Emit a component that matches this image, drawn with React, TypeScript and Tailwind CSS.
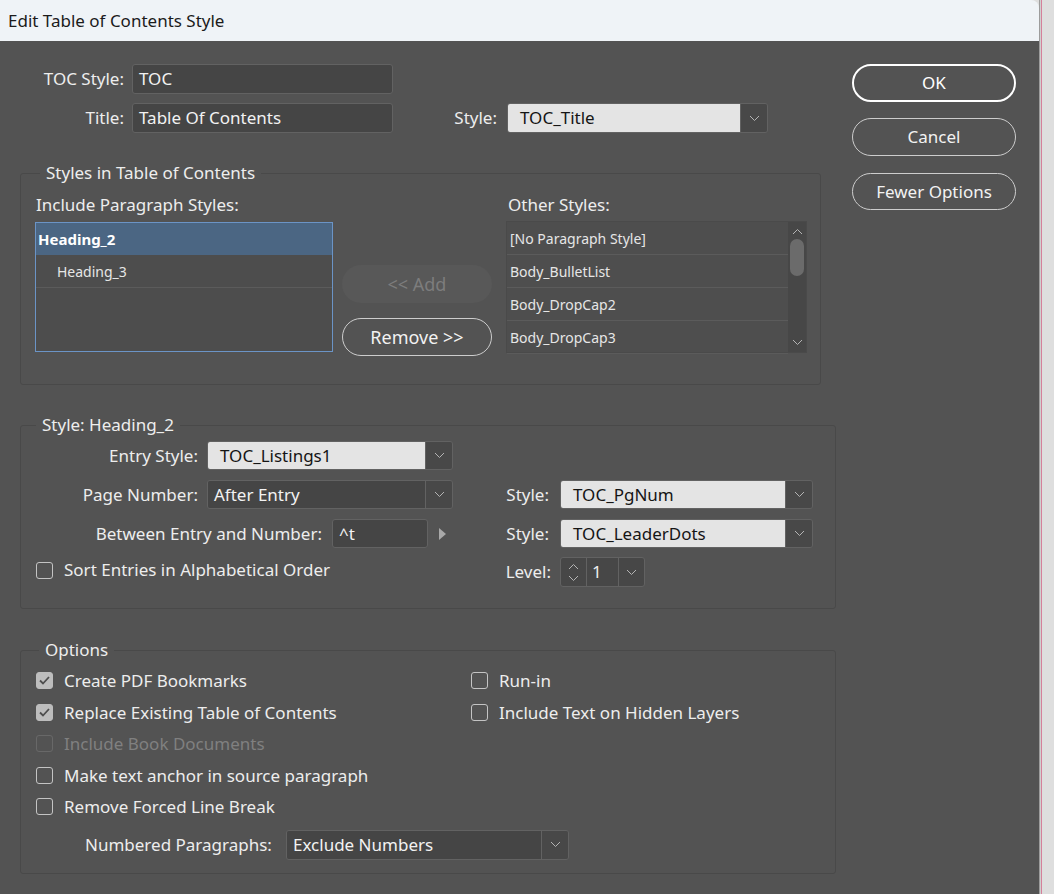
import React from 'react';
import clsx from 'clsx';

function Chevron({ up = false, className }: { up?: boolean; className?: string }) {
  return (
    <svg width="11" height="7" viewBox="0 0 11 7" className={className}>
      <polyline
        points={up ? '1,6 5.5,1.5 10,6' : '1,1 5.5,5.5 10,1'}
        fill="none"
        stroke="#b4b4b4"
        strokeWidth="1"
      />
    </svg>
  );
}

function TextInput({ value, className }: { value: string; className?: string }) {
  return (
    <div
      className={clsx(
        'flex h-full items-center rounded-[3px] border border-[#626262] bg-[#454545] pl-[6px] text-[#f2f2f2]',
        className
      )}
    >
      {value}
    </div>
  );
}

function Dropdown({ value, light, className }: { value: string; light?: boolean; className?: string }) {
  return (
    <div className={clsx('flex h-full rounded-[3px] border border-[#626262] overflow-hidden', className)}>
      <div
        className={clsx(
          'flex flex-1 items-center',
          light ? 'bg-[#e4e4e4] pl-[12px] text-[#151515]' : 'bg-[#454545] pl-[6px] text-[#f2f2f2]'
        )}
      >
        {value}
      </div>
      <div className="flex w-[27px] items-center justify-center border-l border-[#626262] bg-[#484848]">
        <Chevron />
      </div>
    </div>
  );
}

function Checkbox({ checked, disabled }: { checked?: boolean; disabled?: boolean }) {
  return (
    <div
      className={clsx(
        'flex h-[17px] w-[17px] shrink-0 items-center justify-center rounded-[3px] border',
        checked
          ? 'border-[#bdbdbd] bg-[#bdbdbd]'
          : disabled
          ? 'border-[#686868]'
          : 'border-[#c4c4c4]'
      )}
    >
      {checked && (
        <svg width="11" height="9" viewBox="0 0 11 9">
          <polyline points="1,4.5 4,7.5 10,1" fill="none" stroke="#4e4e4e" strokeWidth="1.8" />
        </svg>
      )}
    </div>
  );
}

function CheckRow({ label, checked, disabled }: { label: string; checked?: boolean; disabled?: boolean }) {
  return (
    <div className="flex h-[31.5px] items-center">
      <Checkbox checked={checked} disabled={disabled} />
      <span className={clsx('ml-[11px]', disabled ? 'text-[#808080]' : 'text-[#ededed]')}>{label}</span>
    </div>
  );
}

const otherStyles = ['[No Paragraph Style]', 'Body_BulletList', 'Body_DropCap2', 'Body_DropCap3'];

export default function App() {
  return (
    <div className="flex h-[894px] w-[1054px] overflow-hidden bg-[#dedede] font-['Noto_Sans',sans-serif]">
      <div className="flex w-[1040px] shrink-0 flex-col border-r border-[#9c9c9c]">
        {/* Title bar */}
        <div className="flex h-[41px] items-center rounded-tr-[8px] bg-[#eff3f7] pl-[8px] text-[17px] text-[#1b1b1b]">
          Edit Table of Contents Style
        </div>

        {/* Body */}
        <div className="flex flex-1 bg-[#535353] pl-5 pt-[23px] text-[17px] text-[#ededed]">
          <div className="w-[816px]">
            {/* TOC Style / Title */}
            <div className="flex flex-col gap-[9px]">
              <div className="flex h-[30px] items-center">
                <span className="w-[104px] text-right">TOC Style:</span>
                <TextInput value="TOC" className="ml-2 w-[261px]" />
              </div>
              <div className="flex h-[30px] items-center">
                <span className="w-[104px] text-right">Title:</span>
                <TextInput value="Table Of Contents" className="ml-2 w-[261px]" />
                <span className="ml-[54px] w-[50px] text-right">Style:</span>
                <Dropdown value="TOC_Title" light className="ml-[10px] w-[261px]" />
              </div>
            </div>

            {/* Styles in Table of Contents */}
            <fieldset className="mt-[28px] w-[801px] rounded-[3px] border border-[#494949]">
              <legend className="ml-[19px] px-[6px] leading-[24px]">Styles in Table of Contents</legend>
              <div className="flex items-start pb-[28px] pl-[14px] pt-[9px]">
                <div className="w-[298px]">
                  <div className="h-[22px] pl-[1px] leading-[22px]">Include Paragraph Styles:</div>
                  <div className="mt-[6px] h-[130px] border border-[#6b94c6] bg-[#4d4d4d]">
                    <div className="flex h-[32px] items-center bg-[#4b6683] pl-[2px] text-[15px] font-bold text-white">
                      Heading_2
                    </div>
                    <div className="flex h-[33px] items-center border-b border-[#5b5b5b] pl-[21px] text-[14px] text-[#e6e6e6]">
                      Heading_3
                    </div>
                  </div>
                </div>
                <div className="ml-[9px] flex w-[150px] flex-col pt-[71px] text-[18px]">
                  <div className="flex h-[38px] items-center justify-center rounded-[19px] bg-[#585858] text-[#7d7d7d]">
                    &lt;&lt; Add
                  </div>
                  <div className="mt-[15px] flex h-[38px] items-center justify-center rounded-[19px] border border-[#cdcdcd] text-[#f2f2f2]">
                    Remove &gt;&gt;
                  </div>
                </div>
                <div className="ml-[14px] w-[301px]">
                  <div className="h-[22px] pl-[2px] leading-[22px]">Other Styles:</div>
                  <div className="mt-[5px] flex h-[132px] border border-[#4a4a4a] bg-[#4e4e4e] text-[14px] text-[#e6e6e6]">
                    <div className="flex-1">
                      {otherStyles.map((s) => (
                        <div key={s} className="flex h-[33px] items-center border-b border-[#5b5b5b] pl-[3px]">
                          {s}
                        </div>
                      ))}
                    </div>
                    <div className="flex w-[18px] flex-col items-center bg-[#474747] pt-[6px]">
                      <Chevron up />
                      <div className="mt-[4px] h-[37px] w-[14px] rounded-[7px] bg-[#6b6b6b]" />
                      <div className="flex-1" />
                      <Chevron className="mb-[6px]" />
                    </div>
                  </div>
                </div>
              </div>
            </fieldset>

            {/* Style: Heading_2 */}
            <fieldset className="mt-[28px] w-[816px] rounded-[3px] border border-[#494949]">
              <legend className="ml-[15px] px-[6px] leading-[24px]">Style: Heading_2</legend>
              <div className="flex items-start pb-[21px] pt-[4px]">
                <div className="w-[479px]">
                  <div className="flex h-[29px] items-center">
                    <span className="w-[177px] text-right">Entry Style:</span>
                    <Dropdown value="TOC_Listings1" light className="ml-[9px] w-[246px]" />
                  </div>
                  <div className="mt-[10px] flex h-[29px] items-center">
                    <span className="w-[177px] text-right">Page Number:</span>
                    <Dropdown value="After Entry" className="ml-[9px] w-[246px]" />
                  </div>
                  <div className="mt-[10px] flex h-[29px] items-center">
                    <span className="w-[301px] text-right">Between Entry and Number:</span>
                    <TextInput value="^t" className="ml-[10px] w-[96px]" />
                    <svg width="7" height="12" viewBox="0 0 7 12" className="ml-[11px]">
                      <polygon points="0,0 7,6 0,12" fill="#a9a9a9" />
                    </svg>
                  </div>
                  <div className="mt-[11px] flex h-[22px] items-center pl-[15px]">
                    <Checkbox />
                    <span className="ml-[11px]">Sort Entries in Alphabetical Order</span>
                  </div>
                </div>
                <div className="pt-[39px]">
                  <div className="flex h-[29px] items-center">
                    <span className="w-[49px] text-right">Style:</span>
                    <Dropdown value="TOC_PgNum" light className="ml-[11px] w-[253px]" />
                  </div>
                  <div className="mt-[10px] flex h-[29px] items-center">
                    <span className="w-[49px] text-right">Style:</span>
                    <Dropdown value="TOC_LeaderDots" light className="ml-[11px] w-[253px]" />
                  </div>
                  <div className="mt-[9px] flex h-[30px] items-center">
                    <span className="w-[51px] text-right">Level:</span>
                    <div className="ml-[9px] flex h-full w-[85px] overflow-hidden rounded-[3px] border border-[#626262] bg-[#474747]">
                      <div className="flex w-[26px] flex-col items-center justify-center gap-[5px] border-r border-[#626262]">
                        <Chevron up />
                        <Chevron />
                      </div>
                      <div className="flex w-[32px] items-center border-r border-[#626262] pl-[5px]">1</div>
                      <div className="flex flex-1 items-center justify-center">
                        <Chevron />
                      </div>
                    </div>
                  </div>
                </div>
              </div>
            </fieldset>

            {/* Options */}
            <fieldset className="mt-[29px] w-[816px] rounded-[3px] border border-[#494949]">
              <legend className="ml-[18px] px-[6px] leading-[24px]">Options</legend>
              <div className="pb-[13px] pl-[15px] pt-[3px]">
                <div className="grid grid-cols-[435px_1fr]">
                  <CheckRow label="Create PDF Bookmarks" checked />
                  <CheckRow label="Run-in" />
                  <CheckRow label="Replace Existing Table of Contents" checked />
                  <CheckRow label="Include Text on Hidden Layers" />
                  <CheckRow label="Include Book Documents" disabled />
                  <div />
                  <CheckRow label="Make text anchor in source paragraph" />
                  <div />
                  <CheckRow label="Remove Forced Line Break" />
                  <div />
                </div>
                <div className="mt-[7px] flex h-[30px] items-center pl-[49px]">
                  <span className="w-[187px] whitespace-nowrap">Numbered Paragraphs:</span>
                  <Dropdown value="Exclude Numbers" className="ml-[14px] w-[283px]" />
                </div>
              </div>
            </fieldset>
          </div>

          {/* Buttons */}
          <div className="ml-4 flex w-[164px] flex-col">
            <div className="flex h-[38px] items-center justify-center rounded-[19px] border-2 border-white text-white">
              OK
            </div>
            <div className="mt-[16px] flex h-[38px] items-center justify-center rounded-[19px] border border-[#cdcdcd] text-[#f2f2f2]">
              Cancel
            </div>
            <div className="mt-[17px] flex h-[37px] items-center justify-center rounded-[19px] border border-[#cdcdcd] text-[#f2f2f2]">
              Fewer Options
            </div>
          </div>
        </div>
      </div>
      <div className="w-px shrink-0 bg-[#cfcfcf]" />
      <div className="w-px shrink-0 bg-[#d5809a]" />
      <div className="flex-1" />
    </div>
  );
}
